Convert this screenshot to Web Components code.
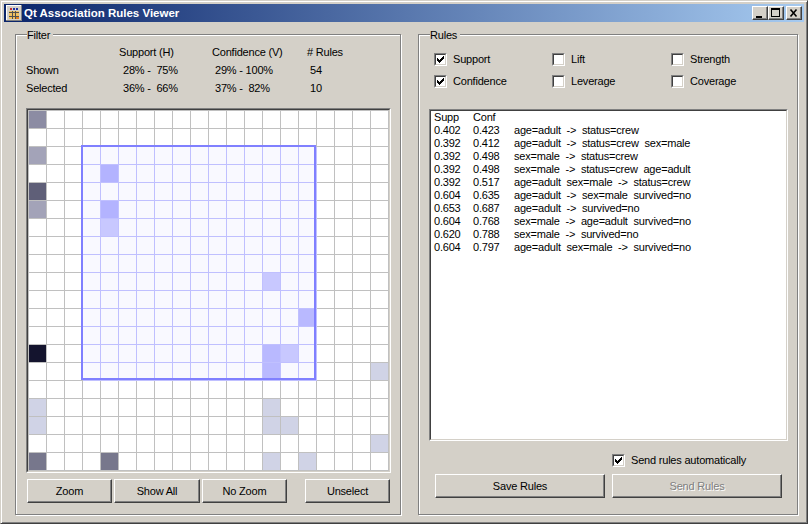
<!DOCTYPE html>
<html>
<head>
<meta charset="utf-8">
<title>Qt Association Rules Viewer</title>
<style>
  html, body { margin: 0; padding: 0; background: #d4d0c8; }
  body { font: 11px "Liberation Sans", Arial, sans-serif; letter-spacing: -0.2px; color: #000; }
</style>
</head>
<body>
<qt-window>
  <group-box style="width:386px" label="Filter">
    <filter-stats></filter-stats>
    <cell-grid></cell-grid>
    <div style="display:flex;margin:6px 0 0 1px">
      <push-button style="width:85px">Zoom</push-button>
      <push-button style="width:86px;margin-left:2px">Show All</push-button>
      <push-button style="width:85px;margin-left:2px">No Zoom</push-button>
      <push-button style="width:85px;margin-left:18px">Unselect</push-button>
    </div>
  </group-box>
  <group-box style="width:380px" label="Rules">
    <measure-options></measure-options>
    <rule-list></rule-list>
    <div style="display:flex;height:18px;margin:10px 0 0 183px">
      <check-box checked>Send rules automatically</check-box>
    </div>
    <div style="display:flex;gap:7px;margin:5px 0 0 6px">
      <push-button style="width:170px">Save Rules</push-button>
      <push-button style="width:170px" disabled>Send Rules</push-button>
    </div>
  </group-box>
</qt-window>

<script>
class QtWindow extends HTMLElement {
  constructor() {
    super();
    this.attachShadow({ mode: 'open' });
  }

  connectedCallback() {
    this.shadowRoot.innerHTML = `
      <style>
        :host {
          display: block;
          box-sizing: border-box;
          width: 808px;
          height: 524px;
          padding: 2px;
          background: #d4d0c8;
          border: 1px solid;
          border-color: #d4d0c8 #404040 #404040 #d4d0c8;
          box-shadow: inset 1px 1px 0 #fff, inset -1px -1px 0 #808080;
          overflow: hidden;
        }
        .body {
          display: flex;
          gap: 17px;
          padding: 12px 0 0 12px;
        }
      </style>
      <title-bar></title-bar>
      <div class="body"><slot></slot></div>
    `;
  }
}

class TitleBar extends HTMLElement {
  constructor() {
    super();
    this.attachShadow({ mode: 'open' });
  }

  connectedCallback() {
    this.shadowRoot.innerHTML = `
      <style>
        :host {
          display: flex;
          align-items: center;
          box-sizing: border-box;
          height: 18px;
          width: 800px;
          margin: 1px 0 0 1px;
          padding: 0 2px 0 2px;
          background: linear-gradient(to right, #0a246a, #a6caf0);
          color: #fff;
          font: bold 11.5px "Liberation Sans", Arial, sans-serif;
          letter-spacing: 0;
        }
        .icon { width: 16px; height: 16px; margin-right: 2px; }
        .text { flex: 1; }
        .btn {
          box-sizing: border-box;
          width: 16px;
          height: 14px;
          background: #d4d0c8;
          border: 1px solid;
          border-color: #fff #404040 #404040 #fff;
          box-shadow: inset -1px -1px 0 #808080;
          display: flex;
        }
        .close { margin-left: 2px; }
        svg { display: block; }
      </style>
      <svg class="icon" viewBox="0 0 16 16" shape-rendering="crispEdges">
        <rect width="16" height="16" fill="#d4d0c8"/>
        <rect x="0" y="0" width="16" height="1" fill="#fff"/>
        <rect x="0" y="0" width="1" height="16" fill="#fff"/>
        <rect x="15" y="0" width="1" height="16" fill="#808080"/>
        <rect x="0" y="15" width="16" height="1" fill="#808080"/>
        <rect x="4" y="3" width="2" height="2" fill="#c03030"/>
        <rect x="7" y="3" width="2" height="2" fill="#2030a0"/>
        <rect x="10" y="3" width="2" height="2" fill="#2030a0"/>
        <rect x="3" y="6" width="10" height="8" fill="#f0c060"/>
        <rect x="3" y="7" width="10" height="1" fill="#505050"/>
        <rect x="3" y="11" width="10" height="1" fill="#505050"/>
        <rect x="6" y="6" width="1" height="8" fill="#505050"/>
        <rect x="9" y="6" width="1" height="8" fill="#505050"/>
        <rect x="10" y="12" width="3" height="2" fill="#e08020"/>
      </svg>
      <span class="text">Qt Association Rules Viewer</span>
      <div class="btn">
        <svg width="14" height="12" shape-rendering="crispEdges"><rect x="3" y="9" width="6" height="2" fill="#000"/></svg>
      </div>
      <div class="btn">
        <svg width="14" height="12" shape-rendering="crispEdges"><path d="M2 1h9v9h-9zM3 3v6h7v-6z" fill="#000" fill-rule="evenodd"/></svg>
      </div>
      <div class="btn close">
        <svg width="14" height="12"><path d="M3.5 2.5l6 7M9.5 2.5l-6 7" stroke="#000" stroke-width="1.6" fill="none"/></svg>
      </div>
    `;
  }
}

class GroupBox extends HTMLElement {
  constructor() {
    super();
    this.attachShadow({ mode: 'open' });
  }

  connectedCallback() {
    this.shadowRoot.innerHTML = `
      <style>
        :host {
          display: flex;
          flex-direction: column;
          box-sizing: border-box;
          height: 481px;
          padding: 0 10px;
          border: 1px solid #808080;
          box-shadow: inset 1px 1px 0 #fff, 1px 1px 0 #fff;
        }
        .legend {
          align-self: flex-start;
          height: 16px;
          line-height: 17px;
          margin: -8px 0 0 1px;
          padding: 0 3px 0 0;
          background: #d4d0c8;
        }
      </style>
      <div class="legend">${this.getAttribute('label')}</div>
      <slot></slot>
    `;
  }
}

class FilterStats extends HTMLElement {
  constructor() {
    super();
    this.attachShadow({ mode: 'open' });
  }

  connectedCallback() {
    const rows = [
      ['', 'Support (H)', 'Confidence (V)', '# Rules'],
      ['Shown', '<i class="w"></i>28% -  75%', '<i></i>29% - 100%', '<i></i>54'],
      ['Selected', '<i class="w"></i>36% -  66%', '<i></i>37% -  82%', '<i></i>10'],
    ];
    this.shadowRoot.innerHTML = `
      <style>
        :host {
          display: grid;
          grid-template-columns: 93px 93px 95px 60px;
          grid-auto-rows: 18px;
          line-height: 18px;
          white-space: pre;
        }
        i { display: inline-block; width: 3px; }
        i.w { width: 4px; }
      </style>
      ${rows.flat().map(t => `<div>${t}</div>`).join('')}
    `;
  }
}

// cells that carry a rule: col, row, colour
const GRID_CELLS = [
  [0, 0, '#8c8ca3'], [0, 2, '#a3a3b8'], [0, 4, '#5f5f78'], [0, 5, '#a3a3b8'],
  [0, 13, '#14142e'], [0, 16, '#d0d3e6'], [0, 17, '#d0d3e6'], [0, 19, '#77778c'],
  [4, 3, '#b3b3ff'], [4, 5, '#b3b3ff'], [4, 6, '#c8c8ff'], [4, 19, '#77778c'],
  [13, 9, '#c8c8ff'], [13, 13, '#b9b9ff'], [13, 14, '#b9b9ff'], [14, 13, '#c8c8ff'],
  [15, 11, '#b9b9ff'], [19, 14, '#d0d3e6'], [19, 18, '#d0d3e6'],
  [13, 16, '#d0d3e6'], [13, 17, '#d0d3e6'], [14, 17, '#d0d3e6'],
  [13, 19, '#d0d3e6'], [15, 19, '#d0d3e6'],
];

class CellGrid extends HTMLElement {
  constructor() {
    super();
    this.attachShadow({ mode: 'open' });
  }

  connectedCallback() {
    const fills = new Map(GRID_CELLS.map(c => [c[0] + ',' + c[1], c[2]]));
    let cells = '';
    for (let r = 0; r < 20; r++) {
      for (let c = 0; c < 20; c++) {
        const fill = fills.get(c + ',' + r);
        const inSel = c >= 3 && c <= 15 && r >= 2 && r <= 14;
        const style = fill ? ` style="background:${fill}"` : '';
        cells += `<div class="cell${inSel ? ' sel' : ''}"${style}></div>`;
      }
    }
    this.shadowRoot.innerHTML = `
      <style>
        :host {
          display: block;
          box-sizing: border-box;
          width: 365px;
          height: 365px;
          margin-top: 11px;
          border: 1px solid;
          border-color: #808080 #fff #fff #808080;
        }
        .inner {
          position: relative;
          box-sizing: border-box;
          width: 363px;
          height: 363px;
          border: 1px solid;
          border-color: #404040 #d4d0c8 #d4d0c8 #404040;
          background: #fff;
        }
        .grid {
          display: grid;
          grid-template-columns: repeat(20, 18px);
          grid-auto-rows: 18px;
          width: 361px;
          height: 361px;
          box-sizing: border-box;
          border-top: 1px solid #c0c0c0;
          border-left: 1px solid #c0c0c0;
        }
        .cell {
          box-sizing: border-box;
          border-right: 1px solid #c0c0c0;
          border-bottom: 1px solid #c0c0c0;
          background: #fff;
        }
        .cell.sel {
          background: #f9f9ff;
          border-color: #c0c0ff;
        }
        .selection {
          position: absolute;
          left: 53px;
          top: 35px;
          width: 235px;
          height: 235px;
          box-sizing: border-box;
          border: 2px solid #8080ff;
        }
      </style>
      <div class="inner">
        <div class="grid">${cells}</div>
        <div class="selection"></div>
      </div>
    `;
  }
}

class PushButton extends HTMLElement {
  constructor() {
    super();
    this.attachShadow({ mode: 'open' });
  }

  connectedCallback() {
    this.shadowRoot.innerHTML = `
      <style>
        :host {
          display: flex;
          align-items: center;
          justify-content: center;
          box-sizing: border-box;
          height: 24px;
          background: #d4d0c8;
          border: 1px solid;
          border-color: #fff #404040 #404040 #fff;
          box-shadow: inset -1px -1px 0 #808080;
        }
        :host([disabled]) {
          color: #808080;
          text-shadow: 1px 1px 0 #fff;
        }
      </style>
      <slot></slot>
    `;
  }
}

class CheckBox extends HTMLElement {
  constructor() {
    super();
    this.attachShadow({ mode: 'open' });
  }

  connectedCallback() {
    const mark = this.hasAttribute('checked')
      ? '<svg width="9" height="9" shape-rendering="crispEdges"><path d="M1 3h1v3h-1zM2 4h1v3h-1zM3 5h1v3h-1zM4 4h1v3h-1zM5 3h1v3h-1zM6 2h1v3h-1zM7 1h1v3h-1z" fill="#000"/></svg>'
      : '';
    this.shadowRoot.innerHTML = `
      <style>
        :host {
          display: flex;
          align-items: center;
          height: 18px;
        }
        .box {
          box-sizing: border-box;
          width: 13px;
          height: 13px;
          margin-right: 6px;
          background: #fff;
          border: 1px solid;
          border-color: #808080 #fff #fff #808080;
        }
        .in {
          box-sizing: border-box;
          width: 11px;
          height: 11px;
          border: 1px solid;
          border-color: #404040 #d4d0c8 #d4d0c8 #404040;
        }
        svg { display: block; }
      </style>
      <div class="box"><div class="in">${mark}</div></div>
      <slot></slot>
    `;
  }
}

class MeasureOptions extends HTMLElement {
  constructor() {
    super();
    this.attachShadow({ mode: 'open' });
  }

  connectedCallback() {
    this.shadowRoot.innerHTML = `
      <style>
        :host {
          display: grid;
          grid-template-columns: 118px 119px 100px;
          grid-auto-rows: 22px;
          margin: 5px 0 0 5px;
          align-items: center;
        }
      </style>
      <check-box checked>Support</check-box>
      <check-box>Lift</check-box>
      <check-box>Strength</check-box>
      <check-box checked>Confidence</check-box>
      <check-box>Leverage</check-box>
      <check-box>Coverage</check-box>
    `;
  }
}

const RULES = [
  ['Supp', 'Conf', ''],
  ['0.402', '0.423', 'age=adult  ->  status=crew'],
  ['0.392', '0.412', 'age=adult  ->  status=crew  sex=male'],
  ['0.392', '0.498', 'sex=male  ->  status=crew'],
  ['0.392', '0.498', 'sex=male  ->  status=crew  age=adult'],
  ['0.392', '0.517', 'age=adult  sex=male  ->  status=crew'],
  ['0.604', '0.635', 'age=adult  ->  sex=male  survived=no'],
  ['0.653', '0.687', 'age=adult  ->  survived=no'],
  ['0.604', '0.768', 'sex=male  ->  age=adult  survived=no'],
  ['0.620', '0.788', 'sex=male  ->  survived=no'],
  ['0.604', '0.797', 'age=adult  sex=male  ->  survived=no'],
];

class RuleList extends HTMLElement {
  constructor() {
    super();
    this.attachShadow({ mode: 'open' });
  }

  connectedCallback() {
    this.shadowRoot.innerHTML = `
      <style>
        :host {
          display: block;
          box-sizing: border-box;
          width: 359px;
          height: 332px;
          margin-top: 17px;
          border: 1px solid;
          border-color: #808080 #fff #fff #808080;
        }
        .in {
          box-sizing: border-box;
          height: 100%;
          padding: 0 0 0 3px;
          background: #fff;
          border: 1px solid;
          border-color: #404040 #d4d0c8 #d4d0c8 #404040;
        }
        .row {
          display: grid;
          grid-template-columns: 39px 41px 1fr;
          height: 13px;
          line-height: 13px;
          white-space: pre;
        }
      </style>
      <div class="in">
        ${RULES.map(r => `<div class="row"><span>${r[0]}</span><span>${r[1]}</span><span>${r[2].replace(/>/g, '&gt;')}</span></div>`).join('')}
      </div>
    `;
  }
}

customElements.define('qt-window', QtWindow);
customElements.define('title-bar', TitleBar);
customElements.define('group-box', GroupBox);
customElements.define('filter-stats', FilterStats);
customElements.define('cell-grid', CellGrid);
customElements.define('push-button', PushButton);
customElements.define('check-box', CheckBox);
customElements.define('measure-options', MeasureOptions);
customElements.define('rule-list', RuleList);
</script>
</body>
</html>
